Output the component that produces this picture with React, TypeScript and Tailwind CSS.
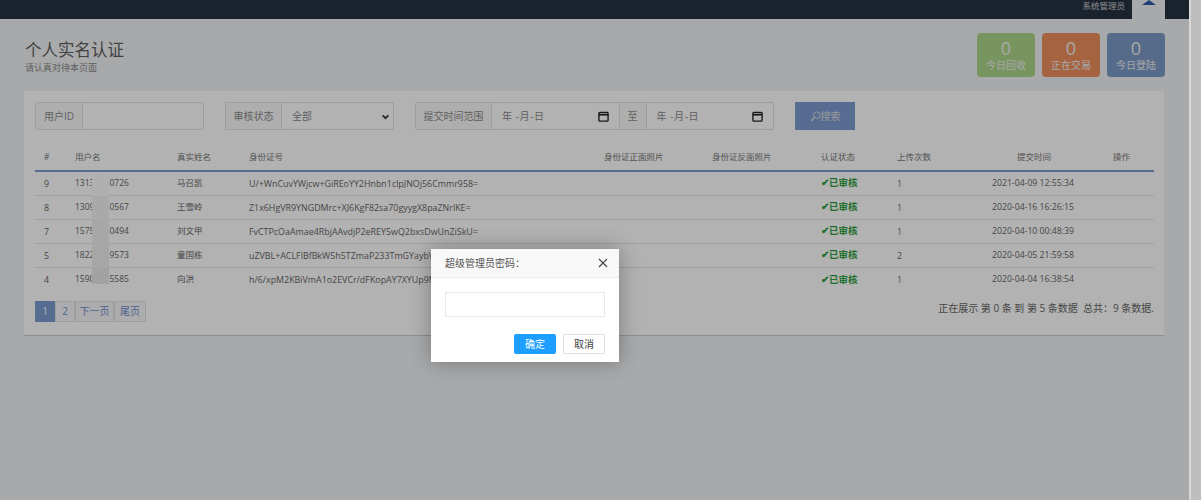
const rows = [
  { id: "9", a: "1313", b: "0726", name: "马召凯", card: "U/+WnCuvYWjcw+GiREoYY2Hnbn1clpJNOj56Cmmr958=", count: "1", time: "2021-04-09 12:55:34", mask: "h-[24px] bg-[#fdfdfd]" },
  { id: "8", a: "1309", b: "0567", name: "王雪岭", card: "Z1x6HgVR9YNGDMrc+XJ6KgF82sa70gyygX8paZNrlKE=", count: "1", time: "2020-04-16 16:26:15", mask: "h-[24px] bg-[#f2f2f2]" },
  { id: "7", a: "1575", b: "0494", name: "刘文甲", card: "FvCTPcOaAmae4RbjAAvdjP2eREY5wQ2bxsDwUnZiSkU=", count: "1", time: "2020-04-10 00:48:39", mask: "h-[24px] bg-[#f0f0f0]" },
  { id: "5", a: "1822", b: "9573", name: "童国栋", card: "uZVBL+ACLFlBfBkW5h5TZmaP233TmGYaybVk3Hq0sWc=", count: "2", time: "2020-04-05 21:59:58", mask: "h-[24px] bg-[#eeeeee]" },
  { id: "4", a: "1590", b: "5585", name: "向洪", card: "h/6/xpM2KBiVmA1o2EVCr/dFKopAY7XYUp9MtRz1cQo=", count: "1", time: "2020-04-04 16:38:54", mask: "h-[16px] self-start bg-[#e8e8e8]" },
];

const font = { fontFamily: '"Open Sans", "Noto Sans CJK SC", sans-serif' };

const Stat = ({ label, color }: { label: string; color: string }) => (
  <div className={`flex h-[44px] w-[58px] flex-col items-center justify-center rounded text-[#f0f0f0] ${color}`}>
    <span className="text-[18px] leading-[20px]">0</span>
    <span className="text-[10px] leading-[15px]">{label}</span>
  </div>
);

const DateInput = () => (
  <div className="flex h-full w-[127px] items-center justify-between px-[10px] text-[10px] text-[#8a8a8a]">
    <span className="tracking-[0.6px]">年 -月-日</span>
    <svg width="11" height="11" viewBox="0 0 24 24" fill="none" stroke="#222" strokeWidth="3">
      <rect x="2" y="3" width="20" height="19" rx="2" />
      <path d="M2 8h20" strokeWidth="4" />
    </svg>
  </div>
);

export default function App() {
  return (
    <div className="relative h-[500px] w-[1201px] overflow-hidden bg-[#f1f2f4] text-[#666]" style={font}>
      <div className="flex h-[19px] justify-end bg-[#263141] pr-[36px]">
        <span className="mr-[7px] text-[8.5px] leading-[12px] text-[#ccc]">系统管理员</span>
        <div className="flex h-[19px] w-[33px] justify-center bg-[#f1f2f4]">
          <div className="h-0 w-0 border-x-[7px] border-b-[5px] border-x-transparent border-b-[#2e5ca8]" />
        </div>
      </div>

      <div className="flex items-start justify-between pl-[25px] pr-[36px] pt-[14px]">
        <div className="pt-[7px]">
          <h1 className="text-[16.5px] leading-[20px] text-[#5f5f5f]">个人实名认证</h1>
          <p className="mt-[3px] text-[9px] leading-[10px] text-[#888]">请认真对待本页面</p>
        </div>
        <div className="flex gap-[7px]">
          <Stat label="今日回收" color="bg-[#acd68a]" />
          <Stat label="正在交易" color="bg-[#ec8f5c]" />
          <Stat label="今日登陆" color="bg-[#7c98c6]" />
        </div>
      </div>

      <div className="ml-[24px] mt-[14px] h-[245px] w-[1140px] border-b border-[#ccc] bg-white px-[11px] pt-[11px]">
        <div className="flex items-start text-[10px] text-[#8a8a8a]">
          <div className="flex h-[28px] w-[169px] items-center rounded-[2px] border border-[#e2e2e2]">
            <span className="flex h-full w-[47px] shrink-0 items-center justify-center border-r border-[#e2e2e2] bg-[#fafafa]">用户ID</span>
          </div>
          <div className="ml-[21px] flex h-[28px] w-[169px] items-center rounded-[2px] border border-[#e2e2e2]">
            <span className="flex h-full w-[56px] shrink-0 items-center justify-center border-r border-[#e2e2e2] bg-[#fafafa]">审核状态</span>
            <span className="flex-1 pl-[10px]">全部</span>
            <svg width="9" height="9" viewBox="0 0 16 16" fill="none" stroke="#333" strokeWidth="3" className="mr-[3px]">
              <path d="M3 6l5 5 5-5" />
            </svg>
          </div>
          <div className="ml-[21px] flex h-[28px] w-[359px] items-center rounded-[2px] border border-[#e2e2e2]">
            <span className="flex h-full w-[76px] shrink-0 items-center justify-center border-r border-[#e2e2e2] bg-[#fafafa]">提交时间范围</span>
            <DateInput />
            <span className="flex h-full w-[28px] shrink-0 items-center justify-center border-x border-[#e2e2e2] bg-[#fafafa]">至</span>
            <DateInput />
          </div>
          <button className="ml-[21px] flex h-[28px] w-[60px] items-center justify-center bg-[#7d9bd0] text-[#ddd]">
            <svg width="11" height="11" viewBox="0 0 16 16" fill="none" stroke="#ddd" strokeWidth="1.4">
              <circle cx="10" cy="6" r="4.8" />
              <path d="M6.5 9.5L1.5 14.5" strokeWidth="2" />
            </svg>
            搜索
          </button>
        </div>

        <table className="mt-[13px] w-[1119px] table-fixed text-left text-[8.5px] text-[#777]">
          <thead>
            <tr className="h-[28px] border-b-2 border-[#7d9bd0]">
              <th className="w-[40px] pl-[9px] pt-[2px] font-normal">#</th>
              <th className="w-[102px] pt-[2px] font-normal">用户名</th>
              <th className="w-[72px] pt-[2px] font-normal">真实姓名</th>
              <th className="w-[355px] pt-[2px] font-normal">身份证号</th>
              <th className="w-[108px] pt-[2px] font-normal">身份证正面照片</th>
              <th className="w-[109px] pt-[2px] font-normal">身份证反面照片</th>
              <th className="w-[76px] pt-[2px] font-normal">认证状态</th>
              <th className="w-[95px] pt-[2px] font-normal">上传次数</th>
              <th className="w-[121px] pl-[25px] pt-[2px] font-normal">提交时间</th>
              <th className="pt-[2px] font-normal">操作</th>
            </tr>
          </thead>
          <tbody>
            {rows.map((r) => (
              <tr key={r.id} className="h-[24px] border-b border-[#e4e4e4] text-[8.9px] text-[#666] last:border-b-0">
                <td className="pl-[9px]">{r.id}</td>
                <td>
                  <div className="flex h-[23px] items-center text-[8.5px]">
                    <span>{r.a}</span>
                    <span className={`relative -ml-[2px] w-[17px] shrink-0 ${r.mask}`} />
                    {r.b}
                  </div>
                </td>
                <td className="text-[8.5px]">{r.name}</td>
                <td colSpan={3} className="whitespace-nowrap">{r.card}</td>
                <td className="text-[9.5px] font-semibold text-[#2e9e3f]">✔已审核</td>
                <td>{r.count}</td>
                <td className="whitespace-nowrap text-[8.7px]">{r.time}</td>
                <td />
              </tr>
            ))}
          </tbody>
        </table>

        <div className="mt-[9px] flex w-[1119px] items-start justify-between">
          <div className="flex h-[21px] text-[10px] text-[#6f8fc9]">
            <span className="flex w-[20px] items-center justify-center bg-[#7d9bd0] text-white">1</span>
            <span className="flex w-[20px] items-center justify-center border border-[#e2e2e2] bg-[#f6f7f9]">2</span>
            <span className="flex w-[39px] items-center justify-center border border-[#e2e2e2] bg-[#f6f7f9]">下一页</span>
            <span className="flex w-[32px] items-center justify-center border border-[#e2e2e2] bg-[#f6f7f9]">尾页</span>
          </div>
          <span className="text-[10px] text-[#666]">正在展示 第 0 条 到 第 5 条数据 &nbsp;总共：9 条数据.</span>
        </div>
      </div>

      <div className="absolute inset-0 bg-black/30" />
      <div className="absolute right-0 top-0 h-full w-[12px] border-l-2 border-[#d8d8d8] bg-[#bebebe]" />

      <div className="absolute left-[431px] top-[249px] w-[188px] bg-white shadow-[0_0_20px_rgba(0,0,0,0.3)]">
        <div className="flex h-[29px] items-center justify-between border-b border-[#eee] bg-[#f8f8f8] pl-[14px] pr-[11px] text-[10px] text-[#555]">
          <span>超级管理员密码：</span>
          <svg width="10" height="10" viewBox="0 0 10 10" stroke="#444" strokeWidth="1.1">
            <path d="M1 1l8 8M9 1l-8 8" />
          </svg>
        </div>
        <div className="px-[14px] pt-[14px]">
          <div className="h-[25px] border border-[#e8e8e8]" />
        </div>
        <div className="flex justify-end gap-[7px] px-[14px] pb-[8px] pt-[17px] text-[10px]">
          <button className="h-[20px] w-[42px] rounded-[2px] bg-[#1e9fff] text-white">确定</button>
          <button className="h-[20px] w-[42px] rounded-[2px] border border-[#dedede] bg-white text-[#444]">取消</button>
        </div>
      </div>
    </div>
  );
}
